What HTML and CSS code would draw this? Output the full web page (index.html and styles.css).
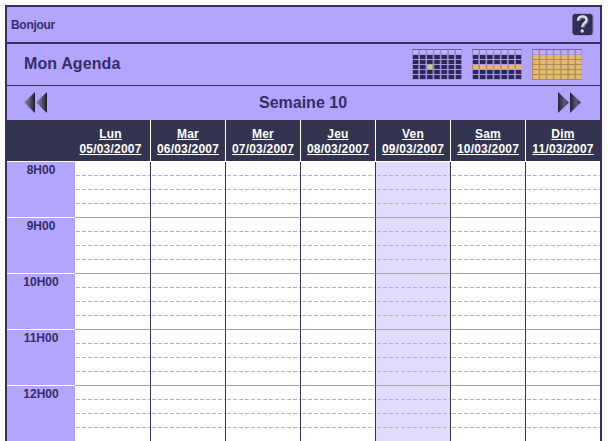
FILE: index.html
```html
<!doctype html>
<html lang="fr">

<head>
  <meta charset="UTF-8">
  <title>Mon Agenda</title>
  <link rel="stylesheet" href="styles.css">
</head>

<body>
  <main id="agenda">
    <header class="welcome">
      <p>Bonjour</p>
      <svg class="help" viewBox="0 0 22 23">
        <rect x="0.5" y="0.5" width="21" height="22" rx="3" fill="#8580ad"/>
        <rect x="0.5" y="1" width="20" height="21" rx="3" fill="#302e57"/>
        <path d="M6.5,8 C6.5,2.5 15,2.5 15,7.3 C15,10.5 10.8,10.5 10.8,14.5" fill="none" stroke="#77759a" stroke-width="3.4"/>
        <path d="M6,7.5 C6,2 14.5,2 14.5,6.8 C14.5,10 10.3,10 10.3,14" fill="none" stroke="#dedee8" stroke-width="2.2"/>
        <circle cx="10.2" cy="18" r="1.7" fill="#dedee8"/>
      </svg>
    </header>

    <section class="title">
      <h1>Mon Agenda</h1>
      <nav class="views">
        <svg viewBox="0 0 50 31">
          <defs>
            <pattern id="top" width="7.15" height="6" patternUnits="userSpaceOnUse">
              <rect width="7.15" height="6" fill="#9184cf"/>
              <rect x="1" y="1" width="5.6" height="4.5" fill="#bcb0f8"/>
            </pattern>
            <pattern id="dark" y="6" width="7.15" height="5" patternUnits="userSpaceOnUse">
              <rect width="7.15" height="5" fill="#a398e0"/>
              <rect x="0.8" width="5.6" height="4" fill="#2c2859"/>
            </pattern>
            <pattern id="gold" y="6" width="7.15" height="5" patternUnits="userSpaceOnUse">
              <rect width="7.15" height="5" fill="#a98a68"/>
              <rect x="1" width="5.8" height="4" fill="#e6bb66"/>
            </pattern>
          </defs>
          <rect width="50" height="6" fill="url(#top)"/>
          <rect y="6" width="50" height="25" fill="url(#dark)"/>
          <rect x="15.1" y="16" width="5.6" height="4" fill="#d5cf68"/>
          <path d="M0,0.5 H50" stroke="#71609f"/>
        </svg>
        <svg viewBox="0 0 50 31">
          <rect width="50" height="6" fill="url(#top)"/>
          <rect y="6" width="50" height="25" fill="url(#dark)"/>
          <rect y="15.5" width="50" height="5" fill="#b7a2c7"/>
          <rect y="16" width="50" height="4" fill="url(#gold)"/>
          <path d="M0,0.5 H50" stroke="#71609f"/>
        </svg>
        <svg viewBox="0 0 50 31">
          <rect width="50" height="6" fill="url(#top)"/>
          <rect y="6" width="50" height="25" fill="url(#gold)"/>
          <path d="M0,0.5 H50" stroke="#8a5f96"/>
        </svg>
      </nav>
    </section>

    <section class="week">
      <svg class="arrow" viewBox="0 0 24 22">
        <defs>
          <linearGradient id="shade" x1="0" x2="1">
            <stop offset="0" stop-color="#8f8b9f"/>
            <stop offset="0.5" stop-color="#5f5b73"/>
            <stop offset="1" stop-color="#1b1833"/>
          </linearGradient>
          <linearGradient id="shade_next" x1="0" x2="1">
            <stop offset="0" stop-color="#252238"/>
            <stop offset="0.6" stop-color="#5d5974"/>
            <stop offset="1" stop-color="#35324a"/>
          </linearGradient>
        </defs>
        <path d="M0,10.5 L11,0 V21 Z" fill="url(#shade)"/>
        <path d="M12,10.5 L23,0 V21 Z" fill="url(#shade)"/>
      </svg>
      <h2>Semaine 10</h2>
      <svg class="arrow" viewBox="0 0 24 22">
        <path d="M11,10.5 L0,0 V21 Z" fill="url(#shade_next)"/>
        <path d="M23,10.5 L12,0 V21 Z" fill="url(#shade_next)"/>
      </svg>
    </section>

    <table>
      <thead>
        <tr>
          <th class="corner"></th>
          <th class="first">Lun<br>05/03/2007</th>
          <th>Mar<br>06/03/2007</th>
          <th>Mer<br>07/03/2007</th>
          <th>Jeu<br>08/03/2007</th>
          <th>Ven<br>09/03/2007</th>
          <th>Sam<br>10/03/2007</th>
          <th>Dim<br>11/03/2007</th>
        </tr>
      </thead>
      <tbody>
        <tr><th>8H00</th><td></td><td></td><td></td><td></td><td class="today"></td><td></td><td></td></tr>
        <tr><th>9H00</th><td></td><td></td><td></td><td></td><td class="today"></td><td></td><td></td></tr>
        <tr><th>10H00</th><td></td><td></td><td></td><td></td><td class="today"></td><td></td><td></td></tr>
        <tr><th>11H00</th><td></td><td></td><td></td><td></td><td class="today"></td><td></td><td></td></tr>
        <tr><th>12H00</th><td></td><td></td><td></td><td></td><td class="today"></td><td></td><td></td></tr>
      </tbody>
    </table>
  </main>
</body>
</html>
```

FILE: styles.css
```css
* {
  box-sizing: border-box;
  padding: 0;
  margin: 0;
}

body {
  height: 441px;
  overflow: hidden;
  background-color: #fefefe;
  font-family: "Liberation Sans", Arial, sans-serif;
  font-size: 12px;
  color: #352d68;
}

#agenda {
  width: 597px;
  margin: 5px 0 0 5px;
  border: 2px solid #343056;
  background-color: #b3a5ff;
}

.welcome,
.title,
.week {
  display: flex;
  align-items: center;
  justify-content: space-between;
}

.welcome {
  height: 37px;
  padding: 0 6px 0 4px;
  border-bottom: 2px solid #343056;
  font-weight: bold;
}

.welcome p {
  letter-spacing: -0.3px;
}

.help {
  width: 22px;
  height: 23px;
}

.title {
  height: 42px;
  padding: 0 18px 0 17px;
  border-bottom: 1px solid #343056;
}

.title h1,
.week h2 {
  font-size: 16px;
  line-height: 18px;
}

.title h1 {
  padding-bottom: 2px;
  letter-spacing: 0.1px;
}

.views {
  display: flex;
  gap: 10px;
}

.views svg {
  width: 50px;
  height: 31px;
}

.week {
  height: 34px;
  padding: 0 18px 0 17px;
}

.arrow {
  width: 24px;
  height: 22px;
}

table {
  width: 593px;
  table-layout: fixed;
  border-collapse: separate;
  border-spacing: 0;
}

thead th {
  width: 75px;
  height: 42px;
  padding-top: 2px;
  border-right: 1px solid #fff;
  border-bottom: 1px solid #fff;
  background-color: #33344f;
  color: #fff;
  letter-spacing: 0.2px;
  line-height: 15px;
  text-decoration: underline;
}

thead th.corner {
  width: 68px;
  border-right: none;
}

thead th.first {
  width: 76px;
  padding-right: 4px;
}

thead th:last-child {
  width: 74px;
}

thead th:last-child,
tbody td:last-child {
  border-right: none;
}

tbody th {
  height: 56px;
  padding-top: 1px;
  border-bottom: 1px solid #fff;
  vertical-align: top;
  line-height: 14px;
}

/* three dashed quarter-hour lines, the hour itself is the cell border */
tbody td {
  border-right: 1px solid #33344a;
  border-bottom: 1px solid #a3a3a8;
  background-color: #fff;
  background-image:
    linear-gradient(90deg, #b4b4b8 4px, transparent 4px),
    linear-gradient(90deg, #b4b4b8 4px, transparent 4px),
    linear-gradient(90deg, #b4b4b8 4px, transparent 4px);
  background-size: 6px 1px;
  background-repeat: repeat-x;
  background-position: 1px 13px, 1px 27px, 1px 41px;
}

tbody td.today {
  background-color: #e1dcff;
}
```
